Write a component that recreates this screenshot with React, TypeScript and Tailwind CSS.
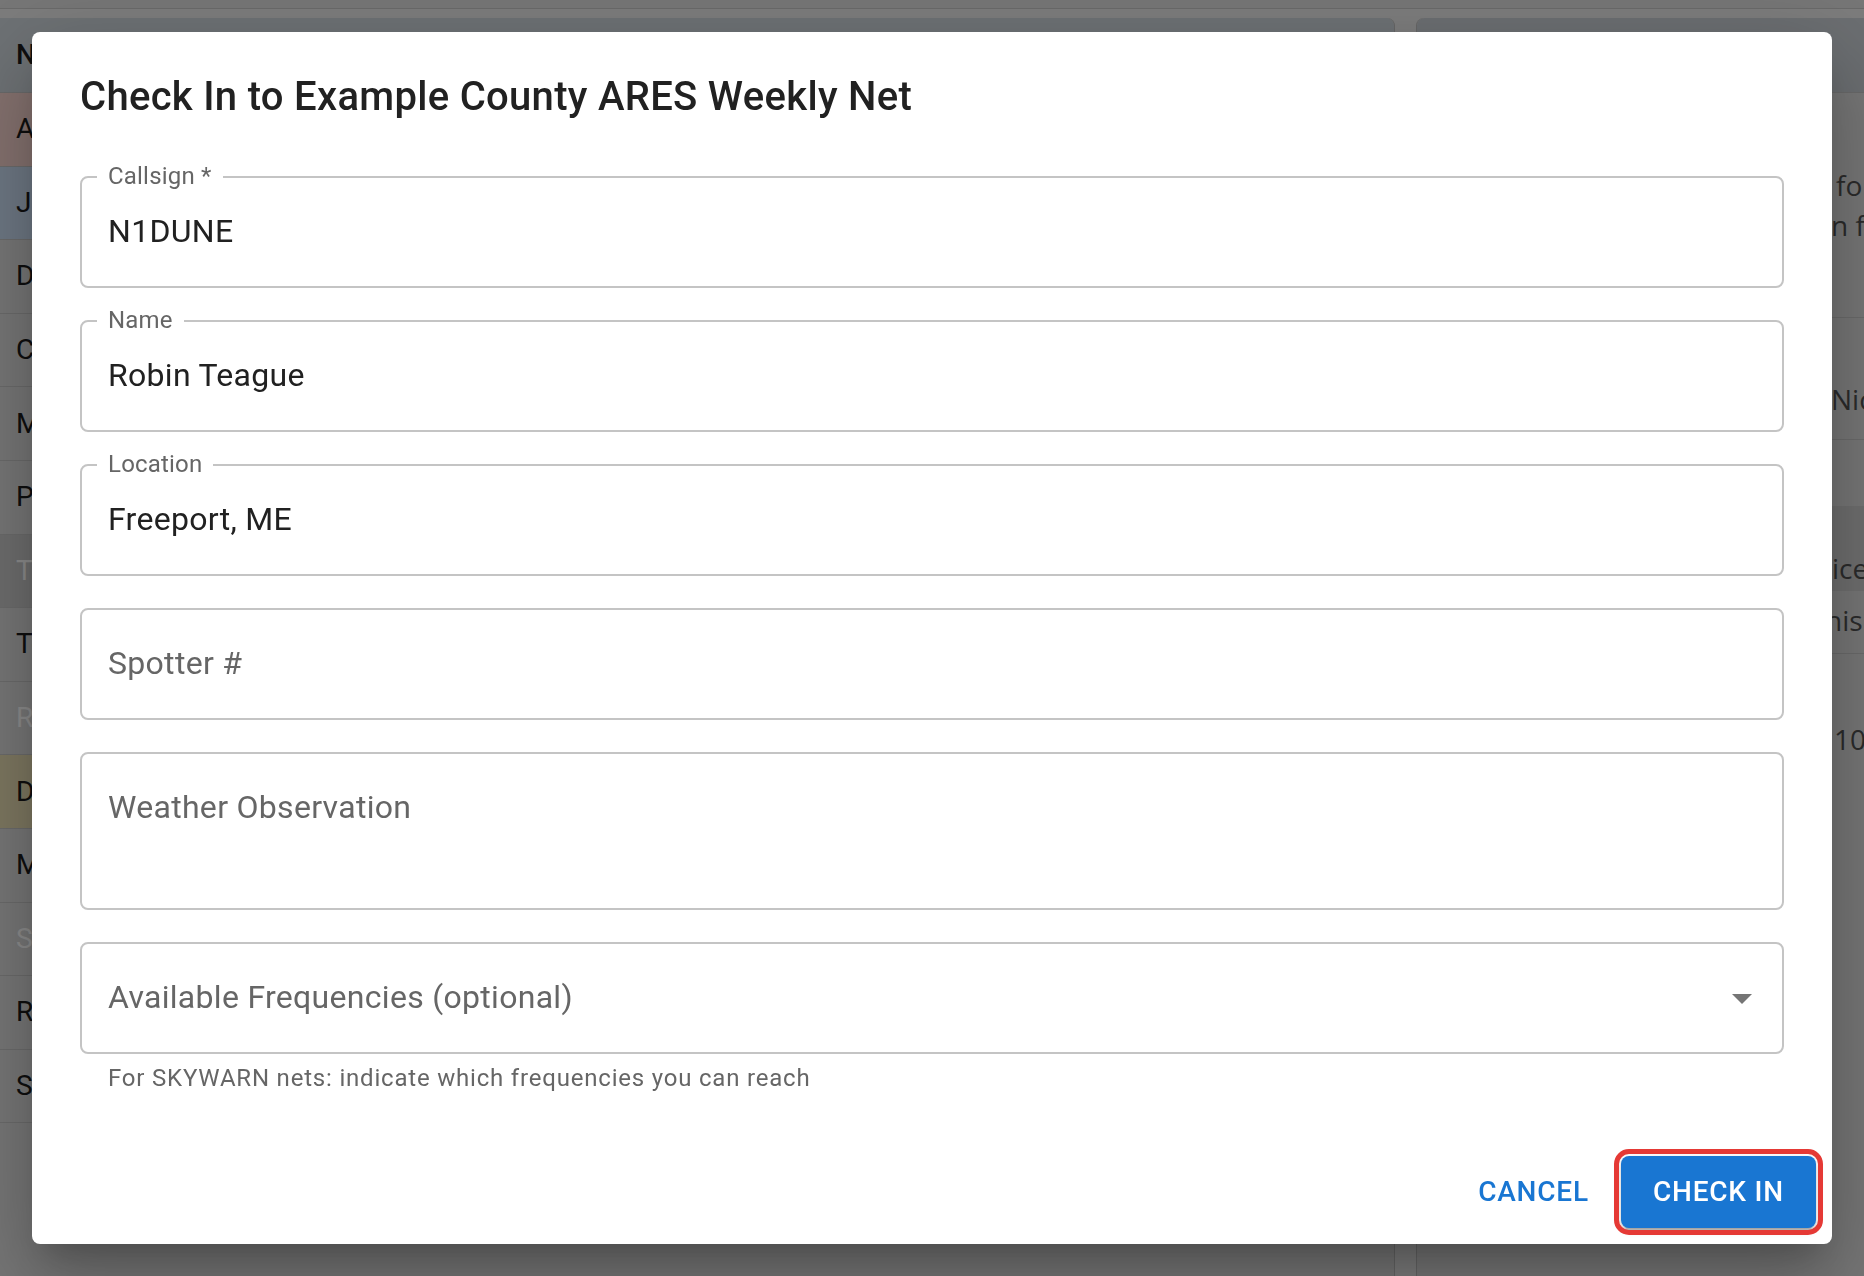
import clsx from 'clsx';

// Rows of the roster table behind the dialog (only their first letters peek out)
const roster = [
  { name: 'Alex', bg: 'bg-[#85726f]', dim: false },
  { name: 'Jo', bg: 'bg-[#6e7884]', dim: false },
  { name: 'Dana', bg: 'bg-[#777777]', dim: false },
  { name: 'Cal', bg: 'bg-[#777777]', dim: false },
  { name: 'Max', bg: 'bg-[#777777]', dim: false },
  { name: 'Pat', bg: 'bg-[#777777]', dim: false },
  { name: 'Ty', bg: 'bg-[#6e6e6e]', dim: true },
  { name: 'Tom', bg: 'bg-[#777777]', dim: false },
  { name: 'Ray', bg: 'bg-[#777777]', dim: true },
  { name: 'Dee', bg: 'bg-[#7e7861]', dim: false },
  { name: 'Mo', bg: 'bg-[#777777]', dim: false },
  { name: 'Sal', bg: 'bg-[#777777]', dim: true },
  { name: 'Rex', bg: 'bg-[#777777]', dim: false },
  { name: 'Sue', bg: 'bg-[#777777]', dim: false },
];

interface FieldProps {
  label?: string;
  value?: string;
  placeholder?: string;
  tall?: boolean;
  select?: boolean;
}

function OutlinedField({ label, value, placeholder, tall, select }: FieldProps) {
  return (
    <div
      className={clsx(
        'relative rounded-[8px] border-2 border-[#c4c4c4] bg-white',
        tall ? 'h-[158px]' : 'h-[112px]'
      )}
    >
      {label && (
        <span className="absolute -top-[14px] left-[15px] bg-white px-[11px] text-[24px] leading-[24px] tracking-[0.2px] text-[#666666]">
          {label}
        </span>
      )}
      <div className="pl-[26px] pr-[80px] pt-[30px] text-[32px] leading-[46px] tracking-[0.3px]">
        {value ? (
          <span className="text-[#212121]">{value}</span>
        ) : (
          <span className="text-[#666666]">{placeholder}</span>
        )}
      </div>
      {select && (
        <svg
          viewBox="0 0 24 24"
          className="absolute right-[16px] top-[30px] h-[48px] w-[48px] fill-[#757575]"
        >
          <path d="M7 10l5 5 5-5z" />
        </svg>
      )}
    </div>
  );
}

export default function App() {
  return (
    <div className="relative h-screen w-full overflow-hidden bg-[#7d7d7d] font-['Roboto',sans-serif]">
      {/* Page behind the backdrop */}
      <div className="flex h-full flex-col">
        <div className="h-[9px] border-b border-[#6a6a6a] bg-[#777777]" />
        <div className="flex flex-1 gap-[21px] pt-[9px]">
          {/* Roster table */}
          <div className="flex w-[1395px] shrink-0 flex-col rounded-tr-[8px] border-r border-[#666666] bg-[#777777]">
            <div className="flex h-[75px] items-center rounded-tr-[8px] border-b border-[#6a6a6a] bg-[#6e7275] pl-[16px] text-[28px] font-medium text-[#0e0e0e]">
              Name
            </div>
            {roster.map((r) => (
              <div
                key={r.name}
                className={clsx(
                  'flex h-[73.6px] items-center border-b border-[#6b6b6b] pl-[16px] text-[28px]',
                  r.bg,
                  r.dim ? 'text-[#8c8c8c]' : 'text-[#0e0e0e]'
                )}
              >
                {r.name}
              </div>
            ))}
          </div>

          {/* Net info card */}
          <div className="flex min-w-0 flex-1 flex-col overflow-hidden rounded-tl-[8px] border-l border-[#666666] bg-[#777777] font-['Open_Sans',sans-serif] text-[28px] leading-[40px] text-[#2b2b2b]">
            <div className="h-[75px] shrink-0 rounded-tl-[8px] border-b border-[#6a6a6a] bg-[#6c6f72]" />
            <div className="h-[225px] shrink-0 border-b border-[#6b6b6b] pt-[72px] whitespace-nowrap">
              <div className="pl-[419px]">for all stations</div>
              <div className="pl-[407px]">in frequency order</div>
            </div>
            <div className="h-[122px] shrink-0 border-b border-[#6b6b6b] pt-[61px] whitespace-nowrap">
              <div className="pl-[414px]">Nick Ames</div>
            </div>
            <div className="h-[214px] shrink-0 border-b border-[#6b6b6b] pt-[66px] whitespace-nowrap">
              <div className="h-[85px] bg-[#6f6f6f] pt-[42px] pl-[371px]">notice</div>
              <div className="pl-[398px] pt-[9px]">this evening</div>
            </div>
            <div className="pt-[65px] whitespace-nowrap">
              <div className="pl-[401px]">110.9 Hz</div>
            </div>
          </div>
        </div>
      </div>

      {/* Dialog */}
      <div className="fixed inset-0 flex items-center justify-center p-[32px]">
        <div className="flex h-full max-h-[1212px] w-full flex-col rounded-[8px] bg-white shadow-[0_22px_30px_-14px_rgba(0,0,0,0.2),0_48px_76px_6px_rgba(0,0,0,0.14),0_18px_92px_16px_rgba(0,0,0,0.12)]">
          <h2 className="px-[48px] pb-[31px] pt-[33px] text-[40px] font-medium leading-[64px] tracking-[0.3px] text-[#212121]">
            Check In to Example County ARES Weekly Net
          </h2>

          <div className="flex flex-1 flex-col px-[48px] pt-[16px]">
            <div className="flex flex-col gap-[32px]">
              <OutlinedField label="Callsign *" value="N1DUNE" />
              <OutlinedField label="Name" value="Robin Teague" />
              <OutlinedField label="Location" value="Freeport, ME" />
              <OutlinedField placeholder="Spotter #" />
              <OutlinedField placeholder="Weather Observation" tall />
              <div>
                <OutlinedField placeholder="Available Frequencies (optional)" select />
                <p className="mt-[4px] px-[28px] text-[24px] leading-[40px] tracking-[0.8px] text-[#666666]">
                  For SKYWARN nets: indicate which frequencies you can reach
                </p>
              </div>
            </div>
          </div>

          <div className="flex items-center justify-end gap-[16px] p-[16px]">
            <button className="rounded-[8px] px-[16px] py-[12px] text-[28px] font-medium uppercase leading-[48px] tracking-[0.8px] text-[#1976d2]">
              Cancel
            </button>
            <button className="rounded-[8px] bg-[#1976d2] px-[32px] py-[12px] text-[28px] font-medium uppercase leading-[48px] tracking-[0.8px] text-white shadow-[0_6px_2px_-4px_rgba(0,0,0,0.2),0_4px_4px_0_rgba(0,0,0,0.14),0_2px_10px_0_rgba(0,0,0,0.12)] outline-[5px] outline-offset-2 outline-[#e53935]">
              Check In
            </button>
          </div>
        </div>
      </div>
    </div>
  );
}
